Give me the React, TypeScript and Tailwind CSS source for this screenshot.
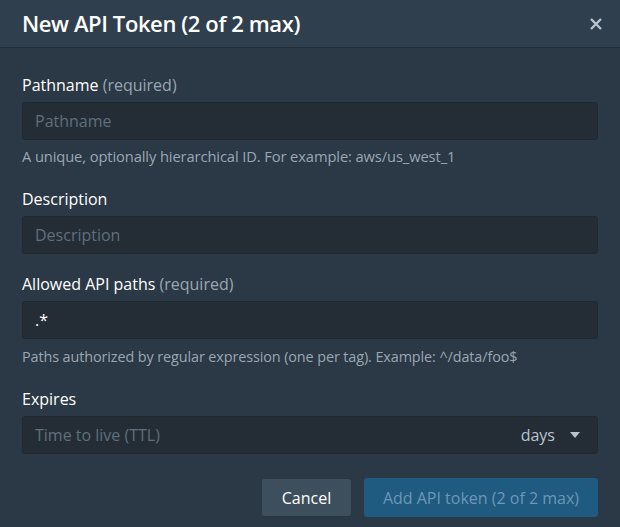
import React from "react";

export default function App() {
  const font = { fontFamily: '"Open Sans", "Noto Sans", sans-serif' };
  return (
    <div className="w-[620px] h-[527px] bg-[#2b3845] flex flex-col" style={font}>
      <div className="h-[48px] bg-[#303f4d] border-b border-[#222c36] flex items-center justify-between pl-[22px] pr-[18px]">
        <div className="text-[22px] font-semibold text-white tracking-[-0.4px]">New API Token (2 of 2 max)</div>
        <svg width="12" height="12" viewBox="0 0 12 12">
          <path d="M1 1 L11 11 M11 1 L1 11" stroke="#b8c3cc" strokeWidth="2.4" strokeLinecap="butt" />
        </svg>
      </div>
      <div className="flex flex-col px-[22px] pt-[26px]">
        <div className="text-[16px] text-white leading-[22px]">
          Pathname <span className="text-[#9aa7b2]">(required)</span>
        </div>
        <div className="mt-[6px] h-[38px] rounded-[3px] bg-[#242d36] border border-[#202830] flex items-center px-[12px] text-[16px] text-[#5f6f7c]">
          Pathname
        </div>
        <div className="mt-[7px] text-[14.7px] text-[#9aa7b2] leading-[19px] tracking-[-0.1px]">
          A unique, optionally hierarchical ID. For example: aws/us_west_1
        </div>
        <div className="mt-[22px] text-[16px] text-white leading-[22px]">Description</div>
        <div className="mt-[6px] h-[38px] rounded-[3px] bg-[#242d36] border border-[#202830] flex items-center px-[12px] text-[16px] text-[#5f6f7c]">
          Description
        </div>
        <div className="mt-[19px] text-[16px] text-white leading-[22px]">
          Allowed API paths <span className="text-[#9aa7b2]">(required)</span>
        </div>
        <div className="mt-[6px] h-[38px] rounded-[3px] bg-[#242d36] border border-[#202830] flex items-center px-[12px] text-[16px] text-white">
          .*
        </div>
        <div className="mt-[8px] text-[14.4px] text-[#9aa7b2] leading-[19px] tracking-[-0.1px]">
          Paths authorized by regular expression (one per tag). Example: ^/data/foo$
        </div>
        <div className="mt-[22px] text-[16px] text-white leading-[22px]">Expires</div>
        <div className="mt-[6px] h-[38px] rounded-[3px] bg-[#242d36] border border-[#202830] flex items-center justify-between pl-[12px] pr-[17px] text-[16px]">
          <span className="text-[#5f6f7c]">Time to live (TTL)</span>
          <span className="flex items-center gap-[15px] text-[#b8c3cc]">
            days
            <svg width="10" height="6" viewBox="0 0 10 6"><path d="M0 0 L10 0 L5 6 Z" fill="#b8c3cc" /></svg>
          </span>
        </div>
        <div className="mt-[24px] flex justify-end gap-[12px]">
          <div className="h-[39px] w-[91px] rounded-[3px] bg-[#3d4e5d] border border-[#2a3641] flex items-center justify-center text-[16px] text-white">
            Cancel
          </div>
          <div className="h-[39px] w-[234px] rounded-[3px] bg-[#1f5a80] flex items-center justify-center text-[16px] text-[#6d97b5]">
            Add API token (2 of 2 max)
          </div>
        </div>
      </div>
    </div>
  );
}
